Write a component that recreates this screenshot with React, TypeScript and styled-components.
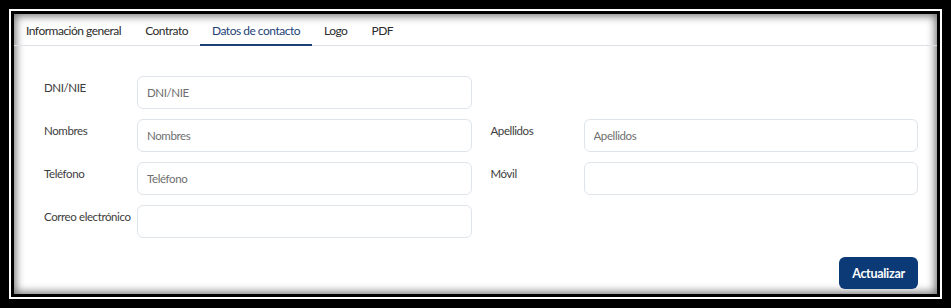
import React from 'react';
import styled, { createGlobalStyle } from 'styled-components';

const GlobalStyle = createGlobalStyle`
  html, body {
    margin: 0;
    padding: 0;
    background: #000;
  }
  body {
    font-family: 'Lato', 'Open Sans', sans-serif;
  }
`;

const Screen = styled.div`
  width: 951px;
  height: 308px;
  box-sizing: border-box;
  padding: 9px;
  background: #000;
`;

const Frame = styled.div`
  height: 100%;
  box-sizing: border-box;
  border: 2px solid #fff;
  padding: 3px;
  background: #000;
`;

const Panel = styled.div`
  height: 100%;
  box-sizing: border-box;
  background: #fff;
  box-shadow: inset 0 0 9px 2px rgba(0, 0, 0, 0.55);
  display: flex;
  flex-direction: column;
`;

const TabBar = styled.div`
  display: flex;
  height: 31px;
  border-bottom: 1px solid #dcdfe4;
`;

const Tab = styled.div<{ $active?: boolean }>`
  display: flex;
  align-items: center;
  padding: 2px 12px 0;
  font-size: 12px;
  letter-spacing: -0.5px;
  color: ${(p) => (p.$active ? '#1d3f78' : '#2b2b2b')};
  border-bottom: 2px solid ${(p) => (p.$active ? '#1d3f78' : 'transparent')};
  margin-bottom: -1px;
  cursor: pointer;
`;

const Form = styled.div`
  display: grid;
  grid-template-columns: 1fr 1fr;
  column-gap: 19px;
  row-gap: 10px;
  padding: 30px 19px 0 30px;
`;

const Field = styled.div`
  display: flex;
  align-items: flex-start;
`;

const Label = styled.label`
  width: 93px;
  flex: none;
  padding-top: 5px;
  font-size: 11.5px;
  letter-spacing: -0.4px;
  color: #3d3d3d;
  white-space: nowrap;
`;

const Input = styled.input`
  flex: 1;
  min-width: 0;
  height: 33px;
  box-sizing: border-box;
  border: 1px solid #dfe4ea;
  border-radius: 6px;
  padding: 0 9px;
  font-family: inherit;
  font-size: 11.5px;
  letter-spacing: -0.4px;
  color: #333;
  outline: none;
  &::placeholder {
    color: #6f6f6f;
  }
`;

const Footer = styled.div`
  display: flex;
  justify-content: flex-end;
  padding: 19px 19px 0 0;
`;

const Button = styled.button`
  width: 79px;
  height: 32px;
  border: none;
  border-radius: 6px;
  background: #0b3a76;
  color: #fff;
  font-family: inherit;
  font-weight: 700;
  font-size: 12.5px;
  letter-spacing: -0.3px;
  cursor: pointer;
`;

const tabs = ['Información general', 'Contrato', 'Datos de contacto', 'Logo', 'PDF'];

type FieldDef = { label: string; placeholder?: string } | null;

const fields: FieldDef[] = [
  { label: 'DNI/NIE', placeholder: 'DNI/NIE' },
  null,
  { label: 'Nombres', placeholder: 'Nombres' },
  { label: 'Apellidos', placeholder: 'Apellidos' },
  { label: 'Teléfono', placeholder: 'Teléfono' },
  { label: 'Móvil' },
  { label: 'Correo electrónico' },
  null,
];

export default function App() {
  return (
    <>
      <GlobalStyle />
      <Screen>
        <Frame>
          <Panel>
            <TabBar>
              {tabs.map((t) => (
                <Tab key={t} $active={t === 'Datos de contacto'}>
                  {t}
                </Tab>
              ))}
            </TabBar>
            <Form>
              {fields.map((f, i) =>
                f ? (
                  <Field key={i}>
                    <Label>{f.label}</Label>
                    <Input placeholder={f.placeholder} />
                  </Field>
                ) : (
                  <div key={i} />
                )
              )}
            </Form>
            <Footer>
              <Button>Actualizar</Button>
            </Footer>
          </Panel>
        </Frame>
      </Screen>
    </>
  );
}
